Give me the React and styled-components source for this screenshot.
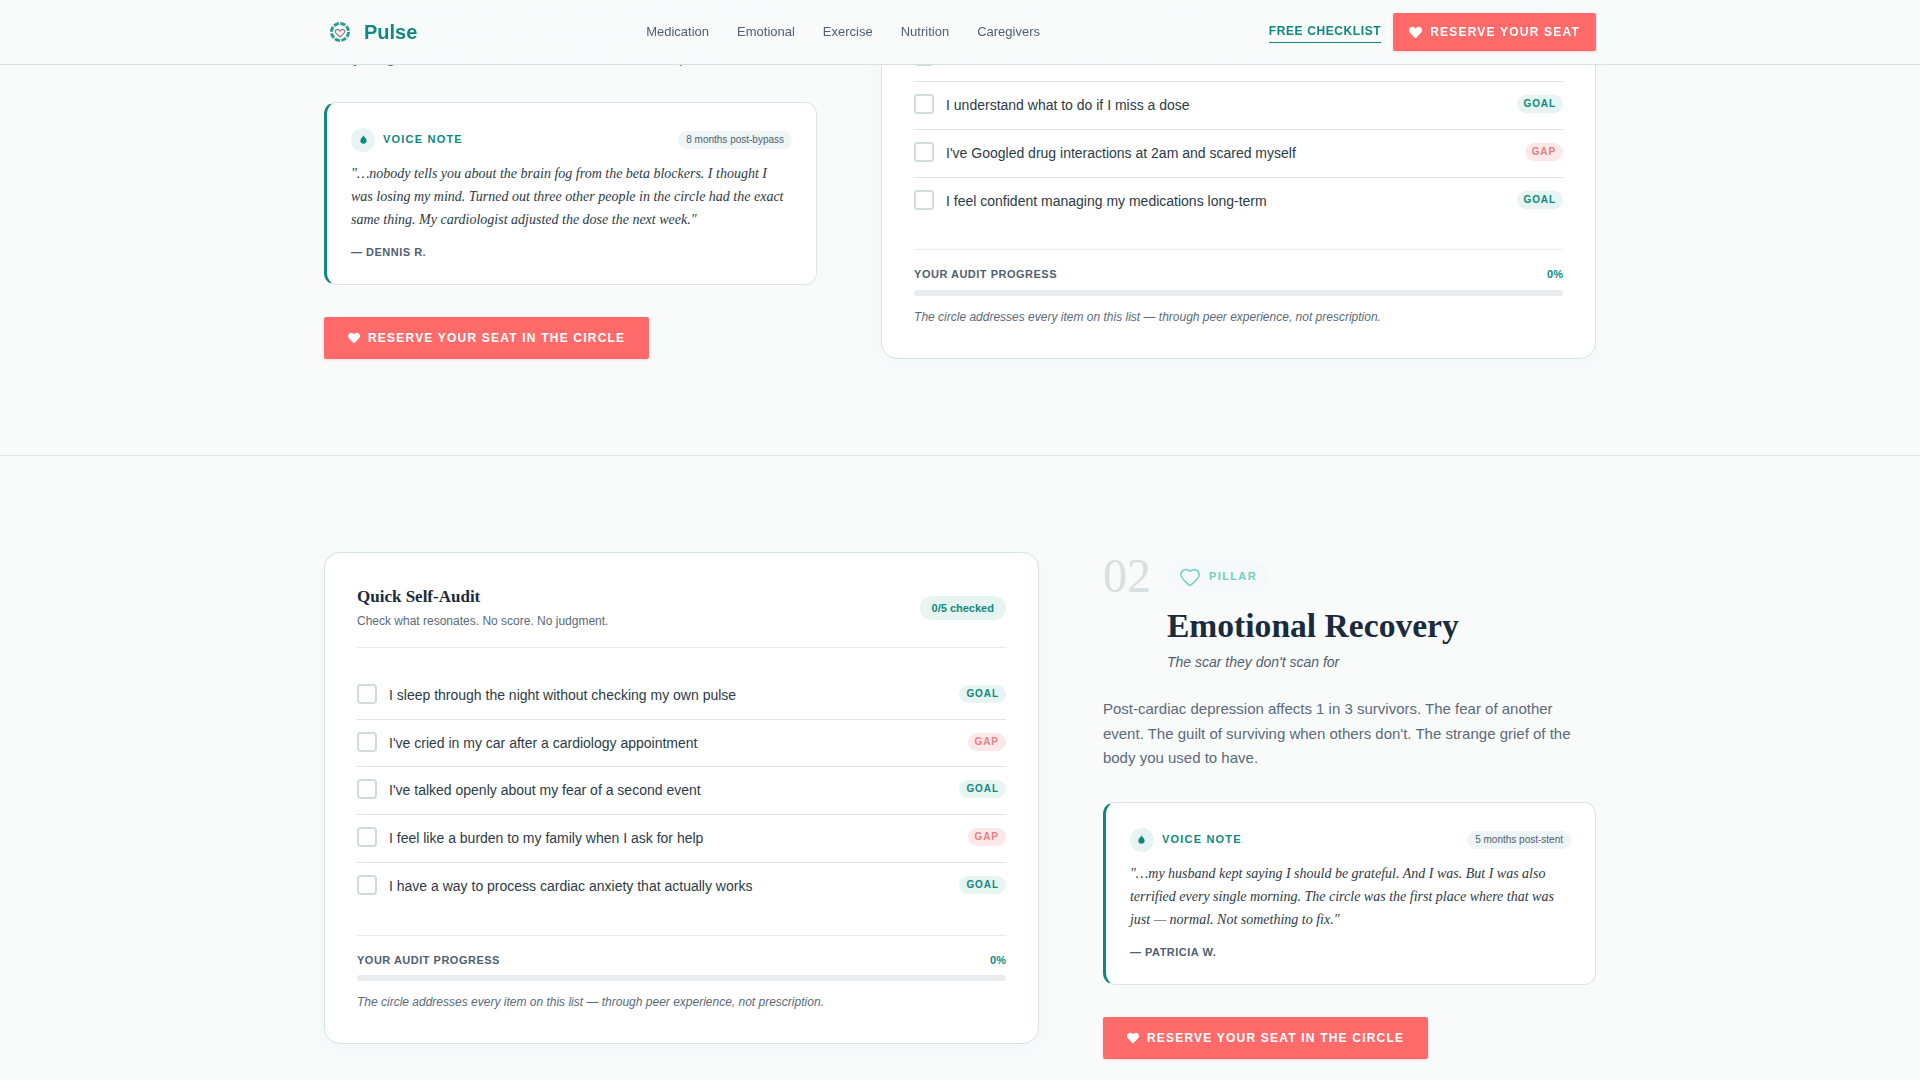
import React from 'react';
import styled, { createGlobalStyle } from 'styled-components';
import { Heart } from 'lucide-react';
import { FaHeart } from 'react-icons/fa';

const teal = '#0d8a80';
const coral = '#ff6b6b';
const ink = '#1a2b3c';
const slate = '#4f6072';

const GlobalStyle = createGlobalStyle`
  html, body {
    margin: 0;
    padding: 0;
    height: 100%;
    overflow: hidden;
    background: #f9fbfb;
    font-family: "Liberation Sans", Arial, sans-serif;
    color: ${ink};
    line-height: 1.6;
  }
  * {
    box-sizing: border-box;
  }
`;

const Nav = styled.header`
  position: fixed;
  z-index: 10;
  top: 0;
  left: 0;
  right: 0;
  height: 65px;
  background: rgba(249, 251, 251, 0.97);
  backdrop-filter: blur(8px);
  border-bottom: 1px solid #d5e1e3;
`;

const NavInner = styled.div`
  width: 1272px;
  height: 64px;
  margin: 0 auto;
  display: flex;
  align-items: center;
  justify-content: space-between;
`;

const Logo = styled.div`
  display: flex;
  align-items: center;
  gap: 8px;
  font-size: 20px;
  font-weight: 700;
  color: ${teal};
`;

const NavLinks = styled.nav`
  display: flex;
  gap: 28px;
`;

const NavLink = styled.a`
  font-size: 13px;
  color: ${slate};
`;

const NavActions = styled.div`
  display: flex;
  align-items: center;
  gap: 12px;
`;

const ChecklistLink = styled.a`
  font-size: 12px;
  font-weight: 700;
  letter-spacing: 0.6px;
  line-height: 18px;
  padding-bottom: 2px;
  color: ${teal};
  border-bottom: 1px solid ${teal};
`;

const CtaButton = styled.button`
  display: inline-flex;
  align-items: center;
  gap: 8px;
  height: ${props => (props.$small ? '38px' : '42px')};
  padding: 0 ${props => (props.$small ? '16px' : '24px')};
  border: 0;
  border-radius: 2px;
  background: ${coral};
  color: #fff;
  font-family: inherit;
  font-size: 12px;
  font-weight: 700;
  letter-spacing: 1.2px;
  box-shadow: 0 1px 3px rgba(255, 107, 107, 0.25);

  svg {
    font-size: ${props => (props.$small ? '13px' : '12px')};
  }
`;

const Viewport = styled.div`
  height: 100vh;
  overflow: hidden;
`;

const Scrolled = styled.main`
  margin-top: -244px;
`;

const Section = styled.section`
  padding: 96px 0;
  border-bottom: 1px solid #dfe6ea;
`;

const SectionGrid = styled.div`
  width: 1272px;
  margin: 0 auto;
  display: grid;
  gap: 64px;
  grid-template-columns: ${props => (props.$flip ? '1.45fr 1fr' : '1fr 1.45fr')};
  align-items: ${props => (props.$flip ? 'start' : 'end')};
`;

const Column = styled.div`
  min-width: 0;
`;

const PillarTop = styled.div`
  display: flex;
  align-items: center;
  gap: 16px;
  height: 48px;
`;

const PillarNumber = styled.span`
  font-family: "Liberation Serif", "Times New Roman", serif;
  font-size: 48px;
  line-height: 1;
  color: #d6e0e1;
`;

const PillarBadge = styled.span`
  display: inline-flex;
  align-items: center;
  gap: 8px;
  margin-top: 2px;
  padding: 4px 12px;
  border-radius: 16px;
  background: rgba(232, 245, 243, 0.2);
  font-size: 11px;
  font-weight: 700;
  letter-spacing: 1.4px;
  color: #6fd0c4;
`;

const PillarTitle = styled.h2`
  margin: 5px 0 0 64px;
  font-family: "Liberation Serif", "Times New Roman", serif;
  font-size: 33.6px;
  font-weight: 700;
  line-height: 42px;
  color: ${ink};
`;

const PillarSub = styled.p`
  margin: 4px 0 0 64px;
  font-size: 14px;
  font-style: italic;
  color: ${slate};
`;

const PillarBody = styled.p`
  margin: 24px 0 0;
  font-size: 15px;
  line-height: 24.5px;
  color: #5a6a7c;
`;

const VoiceCard = styled.div`
  margin-top: 31px;
  padding: 25px 24px 25px;
  background: #fff;
  border: 1px solid #dde4e8;
  border-left: 3px solid ${teal};
  border-radius: 12px;
`;

const VoiceHead = styled.div`
  display: flex;
  align-items: center;
  justify-content: space-between;
`;

const VoiceLabel = styled.div`
  display: flex;
  align-items: center;
  gap: 8px;
  font-size: 11px;
  font-weight: 700;
  letter-spacing: 1.2px;
  color: ${teal};
`;

const MicDot = styled.span`
  display: flex;
  align-items: center;
  justify-content: center;
  width: 24px;
  height: 24px;
  border-radius: 50%;
  background: #eaf3f3;
`;

const VoiceTag = styled.span`
  padding: 2px 8px;
  border-radius: 10px;
  background: #eef5f6;
  font-size: 10px;
  line-height: 14px;
  color: ${slate};
`;

const Quote = styled.p`
  margin: 10px 0 0;
  font-family: "Liberation Serif", "Times New Roman", serif;
  font-size: 14px;
  line-height: 23px;
  font-style: italic;
  color: #2c3a48;
`;

const Author = styled.div`
  margin-top: 15px;
  font-size: 11px;
  line-height: 13px;
  font-weight: 700;
  letter-spacing: 0.5px;
  color: ${slate};
`;

const CtaRow = styled.div`
  margin-top: 32px;
`;

const AuditCard = styled.div`
  padding: 32px;
  background: #fff;
  border: 1px solid #d5e3e6;
  border-radius: 16px;
  box-shadow: 0 4px 20px rgba(13, 138, 128, 0.04);
`;

const AuditHead = styled.div`
  display: flex;
  align-items: center;
  justify-content: space-between;
  padding-bottom: 16px;
  margin-bottom: 24px;
  border-bottom: 1px solid #e8eef0;
`;

const AuditTitle = styled.h3`
  margin: 0 0 3px;
  font-family: "Liberation Serif", "Times New Roman", serif;
  font-size: 17px;
  font-weight: 700;
  line-height: 24px;
  color: ${ink};
`;

const AuditSub = styled.p`
  margin: 0;
  font-size: 12px;
  color: #5a6a7c;
`;

const CheckedPill = styled.span`
  padding: 0 12px;
  height: 24px;
  border-radius: 12px;
  background: #e6f4f2;
  font-size: 11px;
  font-weight: 700;
  line-height: 24px;
  color: ${teal};
`;

const AuditRow = styled.label`
  display: flex;
  align-items: flex-start;
  gap: 12px;
  padding: 12px 0;
  font-size: 14px;
  line-height: 22.7px;
  color: #2c3a48;
  border-bottom: 1px solid #dfe6ea;

  &:last-child {
    border-bottom: 0;
  }
`;

const Checkbox = styled.span`
  flex: none;
  width: 20px;
  height: 20px;
  background: #fff;
  border: 2px solid #cfdcdc;
  border-radius: 4px;
`;

const RowText = styled.span`
  flex: 1;
`;

const KindBadge = styled.span`
  flex: none;
  margin-top: 1px;
  padding: 0 7px;
  height: 18px;
  border-radius: 9px;
  font-size: 10px;
  font-weight: 700;
  line-height: 18px;
  letter-spacing: 0.9px;
  background: ${props => (props.$gap ? '#fde8e9' : '#e6f4f2')};
  color: ${props => (props.$gap ? '#e57f85' : teal)};
`;

const ProgressBlock = styled.div`
  margin-top: 25px;
  padding-top: 16px;
  border-top: 1px solid #e8eef0;
`;

const ProgressHead = styled.div`
  display: flex;
  justify-content: space-between;
  font-size: 11px;
  font-weight: 700;
  letter-spacing: 0.5px;
  color: ${slate};

  b {
    color: ${teal};
    letter-spacing: 0;
  }
`;

const ProgressTrack = styled.div`
  height: 6px;
  margin-top: 6px;
  border-radius: 3px;
  background: #e8ecee;
`;

const AuditNote = styled.p`
  margin: 12px 0 0;
  font-size: 12px;
  line-height: 18px;
  font-style: italic;
  color: #5a6a7c;
`;

const LogoMark = () => (
  <svg width="32" height="32" viewBox="0 0 32 32" fill="none">
    <circle cx="16" cy="16" r="8.5" stroke={teal} strokeWidth="3" strokeDasharray="5.2 1.48" opacity="0.85" />
    <path
      d="M16 21l-4-3.9c-2.1-2.2.8-5 2.9-3.1l1.1 1 1.1-1c2.1-1.9 5 .9 2.9 3.1z"
      fill="#f6eeee"
      stroke="#8c8688"
      strokeWidth="1.2"
      strokeLinejoin="round"
    />
  </svg>
);

const VoiceDrop = () => (
  <svg width="7" height="9" viewBox="0 0 8 10">
    <path d="M4 0c.5 2 3.6 3.6 3.6 6.2a3.6 3.6 0 0 1-7.2 0C.4 3.6 3.5 2 4 0z" fill={teal} />
  </svg>
);

const VoiceNote = ({ tag, quote, author }) => (
  <VoiceCard>
    <VoiceHead>
      <VoiceLabel>
        <MicDot><VoiceDrop /></MicDot>
        VOICE NOTE
      </VoiceLabel>
      <VoiceTag>{tag}</VoiceTag>
    </VoiceHead>
    <Quote>{quote}</Quote>
    <Author>— {author}</Author>
  </VoiceCard>
);

const PillarInfo = ({ pillar }) => (
  <Column>
    <PillarTop>
      <PillarNumber>{pillar.number}</PillarNumber>
      <PillarBadge>
        <Heart size={22} strokeWidth={1.6} />
        PILLAR
      </PillarBadge>
    </PillarTop>
    <PillarTitle>{pillar.title}</PillarTitle>
    <PillarSub>{pillar.sub}</PillarSub>
    <PillarBody>{pillar.body}</PillarBody>
    <VoiceNote tag={pillar.tag} quote={pillar.quote} author={pillar.author} />
    <CtaRow>
      <CtaButton><FaHeart />RESERVE YOUR SEAT IN THE CIRCLE</CtaButton>
    </CtaRow>
  </Column>
);

const Audit = ({ items }) => (
  <AuditCard>
    <AuditHead>
      <div>
        <AuditTitle>Quick Self-Audit</AuditTitle>
        <AuditSub>Check what resonates. No score. No judgment.</AuditSub>
      </div>
      <CheckedPill>0/5 checked</CheckedPill>
    </AuditHead>
    <div>
      {items.map(item => (
        <AuditRow key={item.text}>
          <Checkbox />
          <RowText>{item.text}</RowText>
          <KindBadge $gap={item.gap}>{item.gap ? 'GAP' : 'GOAL'}</KindBadge>
        </AuditRow>
      ))}
    </div>
    <ProgressBlock>
      <ProgressHead>
        <span>YOUR AUDIT PROGRESS</span>
        <b>0%</b>
      </ProgressHead>
      <ProgressTrack />
      <AuditNote>The circle addresses every item on this list — through peer experience, not prescription.</AuditNote>
    </ProgressBlock>
  </AuditCard>
);

const pillars = [
  {
    number: '01',
    title: 'Medication Mastery',
    sub: 'The pills nobody explains',
    body: 'Five new prescriptions and a seven-minute discharge talk. Side effects show up at home, long after the cardiology team has said their goodbye. Many drug side effects are never told about at home, period.',
    tag: '8 months post-bypass',
    quote: '"…nobody tells you about the brain fog from the beta blockers. I thought I was losing my mind. Turned out three other people in the circle had the exact same thing. My cardiologist adjusted the dose the next week."',
    author: 'DENNIS R.',
    items: [
      { text: 'I can name every medication I take and why' },
      { text: 'I know what each medication does and what to watch for on my own log' },
      { text: 'I understand what to do if I miss a dose' },
      { text: "I've Googled drug interactions at 2am and scared myself", gap: true },
      { text: 'I feel confident managing my medications long-term' },
    ],
  },
  {
    number: '02',
    title: 'Emotional Recovery',
    sub: "The scar they don't scan for",
    body: "Post-cardiac depression affects 1 in 3 survivors. The fear of another event. The guilt of surviving when others don't. The strange grief of the body you used to have.",
    tag: '5 months post-stent',
    quote: '"…my husband kept saying I should be grateful. And I was. But I was also terrified every single morning. The circle was the first place where that was just — normal. Not something to fix."',
    author: 'PATRICIA W.',
    items: [
      { text: 'I sleep through the night without checking my own pulse' },
      { text: "I've cried in my car after a cardiology appointment", gap: true },
      { text: "I've talked openly about my fear of a second event" },
      { text: 'I feel like a burden to my family when I ask for help', gap: true },
      { text: 'I have a way to process cardiac anxiety that actually works' },
    ],
  },
];

export default function App() {
  return (
    <Viewport>
      <GlobalStyle />
      <Nav>
        <NavInner>
          <Logo><LogoMark />Pulse</Logo>
          <NavLinks>
            {['Medication', 'Emotional', 'Exercise', 'Nutrition', 'Caregivers'].map(link => (
              <NavLink key={link}>{link}</NavLink>
            ))}
          </NavLinks>
          <NavActions>
            <ChecklistLink>FREE CHECKLIST</ChecklistLink>
            <CtaButton $small><FaHeart />RESERVE YOUR SEAT</CtaButton>
          </NavActions>
        </NavInner>
      </Nav>
      <Scrolled>
        <Section>
          <SectionGrid>
            <PillarInfo pillar={pillars[0]} />
            <Audit items={pillars[0].items} />
          </SectionGrid>
        </Section>
        <Section>
          <SectionGrid $flip>
            <Audit items={pillars[1].items} />
            <PillarInfo pillar={pillars[1]} />
          </SectionGrid>
        </Section>
      </Scrolled>
    </Viewport>
  );
}
